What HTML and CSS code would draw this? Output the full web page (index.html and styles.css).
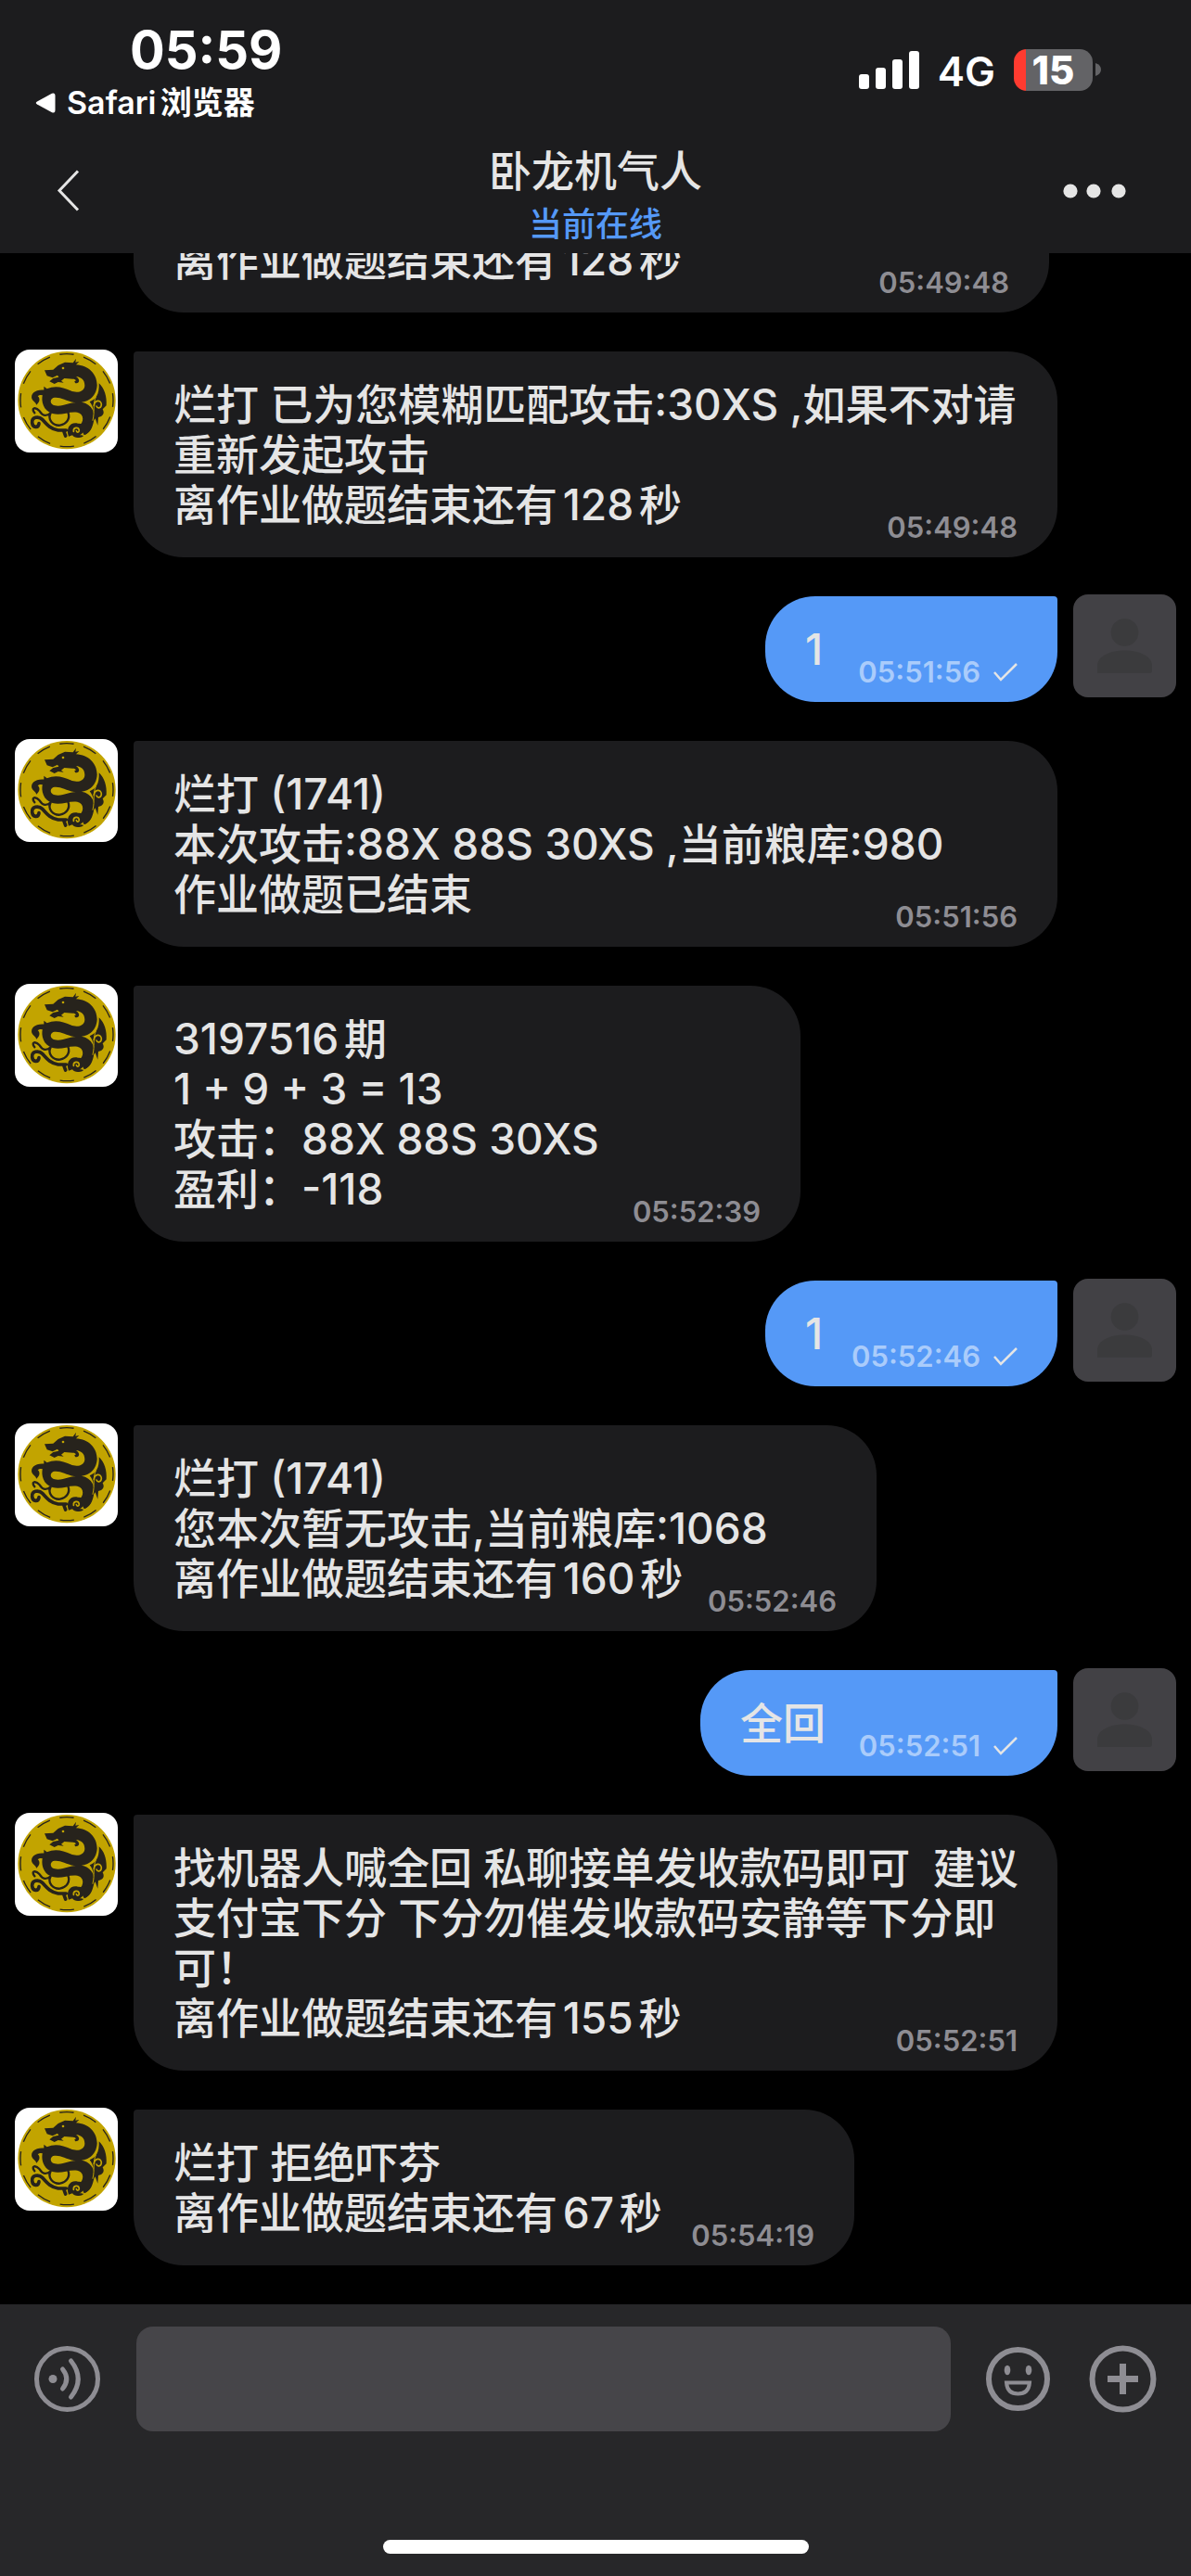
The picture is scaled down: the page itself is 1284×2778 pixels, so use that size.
FILE: index.html
```html
<!DOCTYPE html>
<html lang="zh-CN">
<head>
<meta charset="utf-8">
<meta name="viewport" content="width=device-width, initial-scale=1">
<title>卧龙机气人</title>
<link rel="stylesheet" href="styles.css">
</head>
<body>
<svg class="sprite" aria-hidden="true">
  <symbol id="dragon" viewBox="48 27 333 333">
    <rect x="48" y="27" width="333" height="333" fill="#fff"/>
    <circle cx="216" cy="191" r="158" fill="#c2a400"/>
    <circle cx="216" cy="191" r="150" fill="none" stroke="#27231c" stroke-width="4" stroke-dasharray="46 32.5" stroke-dashoffset="24"/>
    <g fill="#27231c">
      <path d="M144 94 L172 92 L188 78 L210 68 L236 70 L246 56 L244 68 L256 66 L246 76 C286 78 314 106 314 142 C312 186 276 202 240 198 C212 192 192 178 172 183 C160 190 162 204 177 208 C204 214 232 193 264 197 C298 203 312 234 302 264 C297 286 288 296 276 302 L254 276 C272 262 274 236 250 230 C222 226 198 242 170 234 C140 226 132 194 138 172 L132 164 L142 158 L142 146 L152 154 C176 142 204 148 228 160 C250 170 274 162 274 143 C274 124 262 116 246 114 C260 124 258 136 244 136 L240 130 C248 130 246 122 236 122 L208 120 L198 128 L206 134 L188 132 L176 138 L160 130 L172 120 L190 116 L186 110 L170 118 L152 112 Z"/>
      <path d="M320 136 C338 152 346 180 344 208 L332 220 C340 234 332 244 318 246 L316 272 L308 250 L298 262 C304 236 306 216 290 196 C310 188 322 172 320 136 Z"/>
      <path d="M146 158 C116 154 98 168 103 186 C106 194 116 198 118 206 C130 196 130 184 122 178 C128 172 136 174 144 176 Z"/>
      <path d="M222 308 C212 280 228 260 252 266 C274 264 278 298 256 304 C268 302 272 306 268 308 C252 316 240 312 234 304 Z"/>
      <path d="M254 268 L296 262 C298 284 290 296 272 304 Z"/>
    </g>
    <g fill="none" stroke="#27231c" stroke-linecap="round" stroke-width="11">
      <path d="M126 266 C124 282 106 280 104 264 C102 246 124 240 138 254 C154 272 164 284 188 288 L214 288 M206 290 L212 306"/>
      <path d="M112 232 C98 214 116 212 128 226 C138 242 150 244 164 232 M164 232 C152 254 172 274 194 272 C216 268 228 250 220 230" stroke-width="7"/>
    </g>
    <g fill="none" stroke="#c2a400" stroke-width="5" stroke-linecap="round">
      <path d="M238 292 C236 278 254 276 256 288 C256 296 248 296 247 290"/>
      <path d="M304 208 C306 190 326 188 328 204 C328 216 316 220 312 210"/>
      <path d="M310 180 C298 206 308 226 300 256" stroke-width="3"/>
    </g>
    <circle cx="204" cy="87" r="4" fill="#c2a400"/>
  </symbol>
  <symbol id="person" viewBox="0 0 111 111">
    <rect width="111" height="111" fill="#424145"/>
    <circle cx="55.5" cy="41" r="14.8" fill="#3b3b3d"/>
    <path d="M26 85 V77 C26 66 41 60.500 55.500 60.500 C70 60.500 85 66 85 77 V82 Q85 85 82 85 Z" fill="#3b3b3d"/>
  </symbol>
  <symbol id="check" viewBox="0 0 26 20">
    <path d="M1 10 L8 18 L25 1" fill="none" stroke="#e5e5e5" stroke-width="2.500"/>
  </symbol>
</svg>

<header class="header">
  <div class="status">
    <div class="status-left">
      <span class="clock">05:59</span>
      <a class="back-app" href="#safari"><svg width="22" height="22" viewBox="0 0 22 22" aria-hidden="true"><path d="M2 9.500 L18 .8 Q21.500 -.5 21.500 3 V19 Q21.500 22.500 18 21.200 L2 12.500 Q-.5 11 2 9.500 Z" fill="#fff"/></svg><span>Safari浏览器</span></a>
    </div>
    <div class="status-right">
      <svg class="signal" width="65" height="41" viewBox="0 0 65 41" fill="#fff" aria-hidden="true"><rect y="25" width="11" height="16" rx="3"/><rect x="18" y="18" width="11" height="23" rx="3"/><rect x="36" y="9" width="11" height="32" rx="3"/><rect x="54" width="11" height="41" rx="3"/></svg>
      <span class="network">4G</span>
      <span class="battery"><span class="battery-level">15</span><svg width="6" height="14" viewBox="0 0 6 14" aria-hidden="true"><path d="M0 0 Q6 2 6 7 Q6 12 0 14 Z" fill="#636366"/></svg></span>
    </div>
  </div>
  <nav class="nav">
    <button class="icon-button nav-back" aria-label="返回"><svg width="25" height="45" viewBox="0 0 25 45"><path d="M23 1.500 L3 22.500 L23 43.500" fill="none" stroke="#e5e5e5" stroke-width="3"/></svg></button>
    <div class="nav-title">
      <h1 class="title">卧龙机气人</h1>
      <p class="presence">当前在线</p>
    </div>
    <button class="icon-button nav-more" aria-label="更多"><svg width="68" height="16" viewBox="0 0 68 16" fill="#e5e5e5"><circle cx="8" cy="8" r="7.600"/><circle cx="33" cy="8" r="7.600"/><circle cx="60" cy="8" r="7.600"/></svg></button>
  </nav>
</header>

<main class="chat">
  <div class="message">
    <span class="avatar"></span>
    <div class="bubble bubble-cut">
      <div class="last"><span>离作业做题结束还有128秒</span><time class="time">05:49:48</time></div>
    </div>
  </div>
  <div class="message">
    <svg class="avatar"><use href="#dragon"/></svg>
    <div class="bubble bubble-full">
      <p class="tight">烂打 已为您模糊匹配攻击:30XS ,如果不对请<br>重新发起攻击</p>
      <div class="last"><span>离作业做题结束还有128秒</span><time class="time">05:49:48</time></div>
    </div>
  </div>
  <div class="message message-sent">
    <div class="bubble bubble-short">
      <div class="last"><span>1</span><time class="time">05:51:56<svg class="check"><use href="#check"/></svg></time></div>
    </div>
    <svg class="avatar"><use href="#person"/></svg>
  </div>
  <div class="message">
    <svg class="avatar"><use href="#dragon"/></svg>
    <div class="bubble bubble-full">
      <p class="tight">烂打 (1741)<br>本次攻击:88X 88S 30XS ,当前粮库:980</p>
      <div class="last"><span>作业做题已结束</span><time class="time">05:51:56</time></div>
    </div>
  </div>
  <div class="message">
    <svg class="avatar"><use href="#dragon"/></svg>
    <div class="bubble bubble-round">
      <p>3197516期<br>1 + 9 + 3 = 13<br>攻击：88X 88S 30XS</p>
      <div class="last"><span>盈利：-118</span><time class="time">05:52:39</time></div>
    </div>
  </div>
  <div class="message message-sent">
    <div class="bubble bubble-short">
      <div class="last"><span>1</span><time class="time">05:52:46<svg class="check"><use href="#check"/></svg></time></div>
    </div>
    <svg class="avatar"><use href="#person"/></svg>
  </div>
  <div class="message">
    <svg class="avatar"><use href="#dragon"/></svg>
    <div class="bubble bubble-wide">
      <p class="tight">烂打 (1741)<br>您本次暂无攻击,当前粮库:1068</p>
      <div class="last"><span>离作业做题结束还有160秒</span><time class="time">05:52:46</time></div>
    </div>
  </div>
  <div class="message message-sent">
    <div class="bubble bubble-reply">
      <div class="last"><span>全回</span><time class="time">05:52:51<svg class="check"><use href="#check"/></svg></time></div>
    </div>
    <svg class="avatar"><use href="#person"/></svg>
  </div>
  <div class="message">
    <svg class="avatar"><use href="#dragon"/></svg>
    <div class="bubble bubble-full">
      <p>找机器人喊全回 私聊接单发收款码即可&nbsp; 建议<br>支付宝下分 下分勿催发收款码安静等下分即<br>可！</p>
      <div class="last"><span>离作业做题结束还有155秒</span><time class="time">05:52:51</time></div>
    </div>
  </div>
  <div class="message">
    <svg class="avatar"><use href="#dragon"/></svg>
    <div class="bubble bubble-medium">
      <p>烂打 拒绝吓芬</p>
      <div class="last"><span>离作业做题结束还有67秒</span><time class="time">05:54:19</time></div>
    </div>
  </div>
</main>

<footer class="footer">
  <form class="composer">
    <button type="button" class="icon-button" aria-label="语音"><svg width="73" height="73" viewBox="0 0 73 73" fill="none" stroke="#8e8d93" stroke-width="5" stroke-linecap="round"><circle cx="36.500" cy="36.500" r="33"/><circle cx="21" cy="36.500" r="4.500" fill="#8e8d93" stroke="none"/><path d="M31.500 26 Q40 36.500 31.500 47 M40.500 17 Q56 36.500 40.500 56"/></svg></button>
    <input class="text-input" type="text" aria-label="消息">
    <button type="button" class="icon-button" aria-label="表情"><svg width="73" height="73" viewBox="2 0 73 73" fill="none" stroke="#8e8d93" stroke-width="6"><circle cx="36.500" cy="36.500" r="31.500"/><ellipse cx="25" cy="27" rx="3.300" ry="5.300" fill="#8e8d93" stroke="none"/><ellipse cx="48" cy="27" rx="3.300" ry="5.300" fill="#8e8d93" stroke="none"/><path d="M24 40.500 H49 Q48 52.500 36.500 52.500 Q25 52.500 24 40.500 Z" stroke-width="4"/></svg></button>
    <button type="button" class="icon-button" aria-label="更多功能"><svg width="73" height="73" viewBox="0 0 73 73" fill="none" stroke="#8e8d93" stroke-width="6"><circle cx="36.500" cy="36.500" r="33"/><path d="M36.500 20 V53 M20 36.500 H53" stroke-width="7"/></svg></button>
  </form>
  <div class="home-bar"></div>
</footer>
</body>
</html>
```
FILE: styles.css
```css
* {
  box-sizing: border-box;
}

body {
  margin: 0;
  height: 100vh;
  display: flex;
  flex-direction: column;
  background: #000;
  color: #e5e5e5;
  font-family: Inter, "Noto Sans CJK SC", sans-serif;
  font-size: 46px;
  font-weight: 500;
  line-height: 54px;
  text-autospace: normal;
}

p,
h1 {
  margin: 0;
}

.sprite {
  position: absolute;
  width: 0;
  height: 0;
}

.icon-button {
  display: flex;
  padding: 0;
  border: 0;
  background: none;
}

.header {
  flex: none;
  background: #1c1c1e;
}

.status {
  display: flex;
  justify-content: space-between;
  align-items: flex-start;
  padding: 24px 97px 5px 38px;
  color: #fff;
}

.status-left {
  display: flex;
  flex-direction: column;
  gap: 5px;
}

.clock {
  padding-left: 102px;
  font-size: 56px;
  font-weight: 700;
  line-height: 60px;
}

.back-app {
  display: flex;
  align-items: center;
  gap: 12px;
  color: #fff;
  font-size: 34px;
  font-weight: 600;
  line-height: 44px;
  text-decoration: none;
}

.status-right {
  display: flex;
  align-items: center;
  padding-top: 28px;
}

.signal {
  margin-right: 20px;
}

.network {
  padding-top: 4px;
  margin-right: 20px;
  font-size: 44px;
  font-weight: 600;
  line-height: 42px;
}

.battery {
  display: flex;
  align-items: center;
  gap: 3px;
}

.battery-level {
  width: 85px;
  border-radius: 14px;
  background: linear-gradient(90deg, #ff3b30 13px, #636366 13px);
  font-size: 42px;
  font-weight: 800;
  line-height: 45px;
  text-align: center;
}

.nav {
  display: grid;
  grid-template-columns: 1fr auto 1fr;
  align-items: center;
  height: 135px;
  padding: 0 61px;
}

.nav-title {
  padding-top: 14px;
  text-align: center;
}

.nav-more {
  justify-self: end;
  margin-right: 9px;
}

.title {
  font-size: 46px;
  font-weight: 500;
  line-height: 58px;
}

.presence {
  color: #5599f7;
  font-size: 36px;
  line-height: 58px;
}

.chat {
  flex: 1;
  min-height: 0;
  display: flex;
  flex-direction: column;
  justify-content: flex-end;
  gap: 40px;
  padding: 0 16px 42px;
  overflow: hidden;
}

.message {
  flex: none;
  display: flex;
  align-items: flex-start;
  gap: 17px;
}

.message-sent {
  justify-content: flex-end;
}

.avatar {
  flex: none;
  width: 111px;
  height: 111px;
  border-radius: 16px;
}

.bubble {
  display: flex;
  flex-direction: column;
  justify-content: flex-end;
  max-width: 996px;
  margin-top: 2px;
  padding: 30px 43px;
  border-radius: 4px 54px 54px 54px;
  background: #1c1c1e;
  white-space: nowrap;
}

.message-sent .bubble {
  border-radius: 54px 4px 54px 54px;
  background: #5599f7;
}

.bubble-full {
  width: 996px;
}

.bubble-cut {
  width: 987px;
  min-height: 222px;
}

.bubble-wide {
  width: 801px;
}

.bubble-medium {
  width: 777px;
}

.bubble-round {
  width: 719px;
}

.bubble-reply {
  width: 385px;
}

.bubble-short {
  width: 315px;
}

.tight {
  text-autospace: no-autospace;
}

.last {
  display: flex;
  justify-content: space-between;
  align-items: flex-end;
}

.time {
  display: flex;
  align-items: center;
  gap: 14px;
  margin-bottom: -16px;
  color: #8e8d93;
  font-size: 31px;
  font-weight: 600;
  line-height: 36px;
}

.message-sent .time {
  color: #aaccfb;
}

.check {
  width: 26px;
  height: 20px;
}

.footer {
  flex: none;
  padding-top: 24px;
  padding-bottom: 24px;
  background: #272729;
}

.composer {
  display: flex;
  align-items: center;
  gap: 38px;
  padding: 0 37px 0 36px;
}

.text-input {
  flex: 1;
  min-width: 0;
  height: 113px;
  padding: 0 24px;
  border: 0;
  border-radius: 18px;
  background: #464549;
  color: #e5e5e5;
  font: inherit;
}

.home-bar {
  width: 459px;
  height: 15px;
  margin: 117px auto 0;
  border-radius: 8px;
  background: #fff;
}
```
